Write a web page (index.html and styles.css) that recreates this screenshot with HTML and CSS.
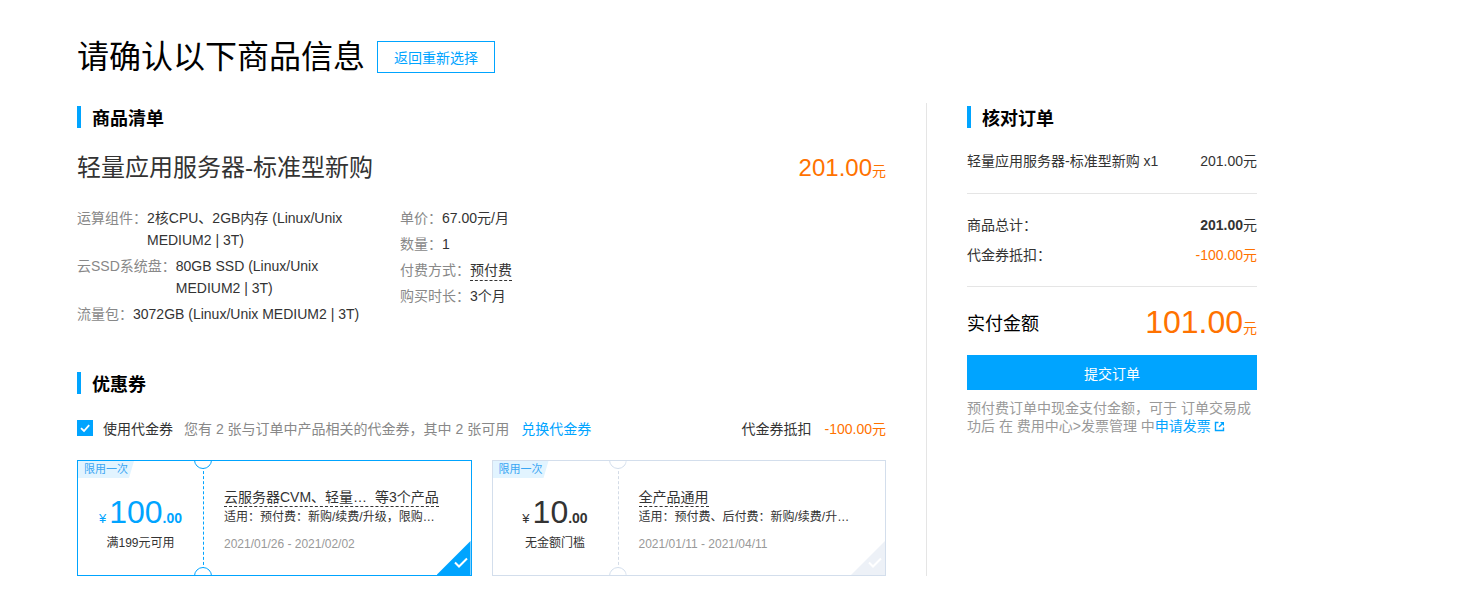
FILE: index.html
```html
<!DOCTYPE html>
<html lang="zh-CN">
<head>
<meta charset="utf-8">
<title>确认商品信息</title>
<link rel="stylesheet" href="styles.css">
</head>
<body>
<div class="page">
  <div class="title-row">
    <h1 class="title">请确认以下商品信息</h1>
    <a class="back-btn" href="#">返回重新选择</a>
  </div>

  <div class="main">
    <div class="left">
      <div class="sec-head">商品清单</div>

      <div class="product-row">
        <div class="product-name">轻量应用服务器-标准型新购</div>
        <div class="product-price">201.00<span class="unit">元</span></div>
      </div>

      <div class="details">
        <div class="col">
          <div class="d-row"><span class="d-label">运算组件：</span><span class="d-val">2核CPU、2GB内存 (Linux/Unix MEDIUM2 | 3T)</span></div>
          <div class="d-row"><span class="d-label">云SSD系统盘：</span><span class="d-val">80GB SSD (Linux/Unix MEDIUM2 | 3T)</span></div>
          <div class="d-row"><span class="d-label">流量包：</span><span class="d-val">3072GB (Linux/Unix MEDIUM2 | 3T)</span></div>
        </div>
        <div class="col">
          <div class="d-row"><span class="d-label">单价：</span><span class="d-val">67.00元/月</span></div>
          <div class="d-row"><span class="d-label">数量：</span><span class="d-val">1</span></div>
          <div class="d-row"><span class="d-label">付费方式：</span><span class="d-val"><span class="dashed">预付费</span></span></div>
          <div class="d-row"><span class="d-label">购买时长：</span><span class="d-val">3个月</span></div>
        </div>
      </div>

      <div class="sec-head coupon-head">优惠券</div>

      <div class="coupon-bar">
        <span class="checkbox">
          <svg width="16" height="16" viewBox="0 0 16 16"><path d="M4 8.2 L7 11 L12.2 5.2" fill="none" stroke="#fff" stroke-width="1.8"/></svg>
        </span>
        <span class="use-label">使用代金券</span>
        <span class="coupon-info">您有 2 张与订单中产品相关的代金券，其中 2 张可用</span>
        <a class="link exchange" href="#">兑换代金券</a>
        <span class="deduct-label">代金券抵扣</span>
        <span class="deduct-val">-100.00元</span>
      </div>

      <div class="cards">
        <div class="card card-active">
          <span class="tag">限用一次</span>
          <span class="notch notch-top"></span>
          <span class="notch notch-bottom"></span>
          <div class="card-left">
            <div class="amount"><span class="cur">¥</span><span class="big">100</span><span class="dec">.00</span></div>
            <div class="cond">满199元可用</div>
          </div>
          <div class="card-right">
            <div class="c-title"><span class="c-title-text">云服务器CVM、轻量…&nbsp; 等3个产品</span></div>
            <div class="c-desc">适用：预付费：新购/续费/升级，限购…</div>
            <div class="c-date">2021/01/26 - 2021/02/02</div>
          </div>
          <span class="corner">
            <svg width="34" height="34" viewBox="0 0 34 34"><path d="M18 21.5 L22 25.5 L30 17.5" fill="none" stroke="#fff" stroke-width="2"/></svg>
          </span>
        </div>

        <div class="card card-idle">
          <span class="tag">限用一次</span>
          <span class="notch notch-top"></span>
          <span class="notch notch-bottom"></span>
          <div class="card-left">
            <div class="amount"><span class="cur">¥</span><span class="big">10</span><span class="dec">.00</span></div>
            <div class="cond">无金额门槛</div>
          </div>
          <div class="card-right">
            <div class="c-title"><span class="c-title-text">全产品通用</span></div>
            <div class="c-desc">适用：预付费、后付费：新购/续费/升…</div>
            <div class="c-date">2021/01/11 - 2021/04/11</div>
          </div>
          <span class="corner">
            <svg width="34" height="34" viewBox="0 0 34 34"><path d="M18 21.5 L22 25.5 L30 17.5" fill="none" stroke="#fff" stroke-width="2"/></svg>
          </span>
        </div>
      </div>
    </div>

    <div class="right">
      <div class="sec-head">核对订单</div>

      <div class="order-item">
        <span>轻量应用服务器-标准型新购 x1</span>
        <span>201.00元</span>
      </div>

      <div class="sum-rows">
        <div class="sum-row"><span>商品总计：</span><span><b>201.00</b>元</span></div>
        <div class="sum-row"><span>代金券抵扣：</span><span class="orange">-100.00元</span></div>
      </div>

      <div class="pay-row">
        <span class="pay-label">实付金额</span>
        <span class="pay-val">101.00<span class="unit">元</span></span>
      </div>

      <a class="submit" href="#">提交订单</a>

      <p class="note"><span>预付费订单中现金支付金额，可于 订单交易成</span><span>功后 在 费用中心&gt;发票管理 中</span><a class="link note-link" href="#">申请发票<svg class="ext" width="11" height="11" viewBox="0 0 11 11"><path d="M4.5 1.5 H1.5 V9.5 H9.5 V6.5" fill="none" stroke="#00a4ff" stroke-width="1.4"/><path d="M6 1 H10 V5 Z" fill="#00a4ff"/><path d="M9.5 1.5 L5 6" stroke="#00a4ff" stroke-width="1.4"/></svg></a></p>
    </div>
  </div>
</div>
</body>
</html>
```

FILE: styles.css
```css
* { box-sizing: border-box; }

body {
  margin: 0;
  background: #fff;
  color: #333;
  font-family: "Liberation Sans", "Noto Sans CJK SC", sans-serif;
  font-size: 14px;
}

a { text-decoration: none; }

.page {
  padding: 41px 0 40px 77px;
}

/* title */
.title-row {
  display: flex;
  align-items: center;
  height: 32px;
}
.title {
  margin: 0;
  font-size: 32px;
  font-weight: normal;
  line-height: 32px;
  color: #000;
}
.back-btn {
  margin-left: 12px;
  width: 118px;
  height: 32px;
  border: 1px solid #00a4ff;
  color: #00a4ff;
  font-size: 14px;
  display: flex;
  align-items: center;
  justify-content: center;
}

/* layout */
.main {
  display: flex;
  margin-top: 30px;
}
.left {
  width: 809px;
  padding-top: 3px;
}
.right {
  width: 331px;
  margin-left: 40px;
  padding: 3px 0 0 40px;
  border-left: 1px solid #e5e5e5;
}

.sec-head {
  display: flex;
  align-items: center;
  gap: 11px;
  height: 22px;
  font-size: 18px;
  font-weight: bold;
  color: #000;
}
.sec-head::before {
  content: "";
  width: 4px;
  height: 22px;
  background: #00a4ff;
}

/* product */
.product-row {
  margin-top: 24px;
  display: flex;
  justify-content: space-between;
  align-items: baseline;
}
.product-name {
  font-size: 24px;
  line-height: 32px;
  color: #333;
}
.product-price {
  font-size: 24px;
  line-height: 32px;
  color: #ff7200;
}
.unit { font-size: 14px; }

.details {
  margin-top: 20px;
  display: grid;
  grid-template-columns: 295px 1fr;
  column-gap: 28px;
  line-height: 22px;
}
.d-row {
  display: flex;
  margin-bottom: 4px;
}
.d-label {
  flex: none;
  color: #888;
}
.d-val { color: #333; }
.dashed {
  display: inline-block;
  line-height: 20px;
  border-bottom: 1px dashed #333;
}

/* coupons */
.coupon-head { margin-top: 43px; }

.coupon-bar {
  margin-top: 23px;
  display: flex;
  align-items: center;
  height: 22px;
}
.checkbox {
  width: 16px;
  height: 16px;
  background: #00a4ff;
  display: flex;
}
.use-label { margin-left: 10px; color: #333; }
.coupon-info { margin-left: 11px; color: #888; }
.link { color: #00a4ff; }
.exchange { margin-left: 12px; }
.deduct-label { margin-left: auto; color: #333; }
.deduct-val { margin-left: 13px; color: #ff7200; }

.cards {
  margin-top: 21px;
  display: grid;
  grid-template-columns: 1fr 1fr;
  column-gap: 20px;
}
.card {
  position: relative;
  height: 116px;
  border: 1px solid #d3deec;
  display: flex;
  overflow: hidden;
}
.card-active { border-color: #00a4ff; }

.tag {
  position: absolute;
  top: 0;
  left: 0;
  width: 56px;
  height: 17px;
  padding-left: 6px;
  background: #e2f4ff;
  color: #3aa6f3;
  font-size: 11px;
  line-height: 17px;
  clip-path: polygon(0 0, 100% 0, calc(100% - 5px) 100%, 0 100%);
}

.notch {
  position: absolute;
  left: 116px;
  width: 18px;
  height: 18px;
  border-radius: 50%;
  background: #fff;
  border: 1px solid #d3deec;
  z-index: 2;
}
.card-active .notch { border-color: #00a4ff; }
.notch-top {
  top: -10px;
  clip-path: inset(50% 0 0 0);
}
.notch-bottom {
  bottom: -10px;
  clip-path: inset(0 0 50% 0);
}

.card-left {
  width: 125px;
  flex: none;
  padding-top: 36px;
  text-align: center;
  color: #333;
}
.card-active .card-left .amount { color: #00a4ff; }
.amount {
  line-height: 30px;
  white-space: nowrap;
}
.cur { font-size: 13px; margin-right: 3px; }
.big { font-size: 32px; }
.dec { font-size: 14px; font-weight: bold; }
.cond {
  margin-top: 0;
  font-size: 12px;
  line-height: 18px;
  color: #333;
}

.card-right {
  flex: 1;
  min-width: 0;
  border-left: 1px dashed #d3dbe6;
  padding: 26px 36px 0 20px;
}
.card-active .card-right { border-left-color: #00a4ff; }
.c-title {
  line-height: 20px;
  height: 20px;
  white-space: nowrap;
}
.c-title-text {
  display: inline-block;
  line-height: 17px;
  font-size: 14px;
  color: #333;
  border-bottom: 1px dashed #333;
}
.c-desc {
  font-size: 12px;
  line-height: 20px;
  color: #333;
  white-space: nowrap;
  overflow: hidden;
}
.c-date {
  margin-top: 7px;
  font-size: 12px;
  line-height: 20px;
  color: #999;
}

.corner {
  position: absolute;
  right: 0;
  bottom: 0;
  width: 34px;
  height: 34px;
  background: #edf1f7;
  clip-path: polygon(100% 0, 100% 100%, 0 100%);
  display: flex;
}
.card-active .corner { background: #00a4ff; }

/* right panel */
.order-item {
  margin-top: 22px;
  display: flex;
  justify-content: space-between;
  line-height: 22px;
  padding-bottom: 21px;
  border-bottom: 1px solid #e5e5e5;
  color: #333;
}
.sum-rows {
  padding: 20px 0;
  border-bottom: 1px solid #e5e5e5;
  display: flex;
  flex-direction: column;
  gap: 8px;
}
.sum-row {
  display: flex;
  justify-content: space-between;
  line-height: 22px;
}
.orange { color: #ff7200; }

.pay-row {
  margin-top: 20px;
  height: 36px;
  display: flex;
  justify-content: space-between;
  align-items: center;
}
.pay-label {
  font-size: 18px;
  color: #000;
  margin-top: -6px;
}
.pay-val {
  font-size: 32px;
  line-height: 36px;
  color: #ff7200;
}

.submit {
  margin-top: 12px;
  height: 35px;
  background: #00a4ff;
  color: #fff;
  display: flex;
  align-items: center;
  justify-content: center;
  font-size: 14px;
}

.note {
  margin: 9px 0 0;
  color: #999;
  line-height: 18px;
}
.note-link {
  display: inline-block;
  line-height: 18px;
  height: 18px;
  overflow: hidden;
  vertical-align: top;
}
.ext {
  margin-left: 3px;
  vertical-align: -1px;
}
```
